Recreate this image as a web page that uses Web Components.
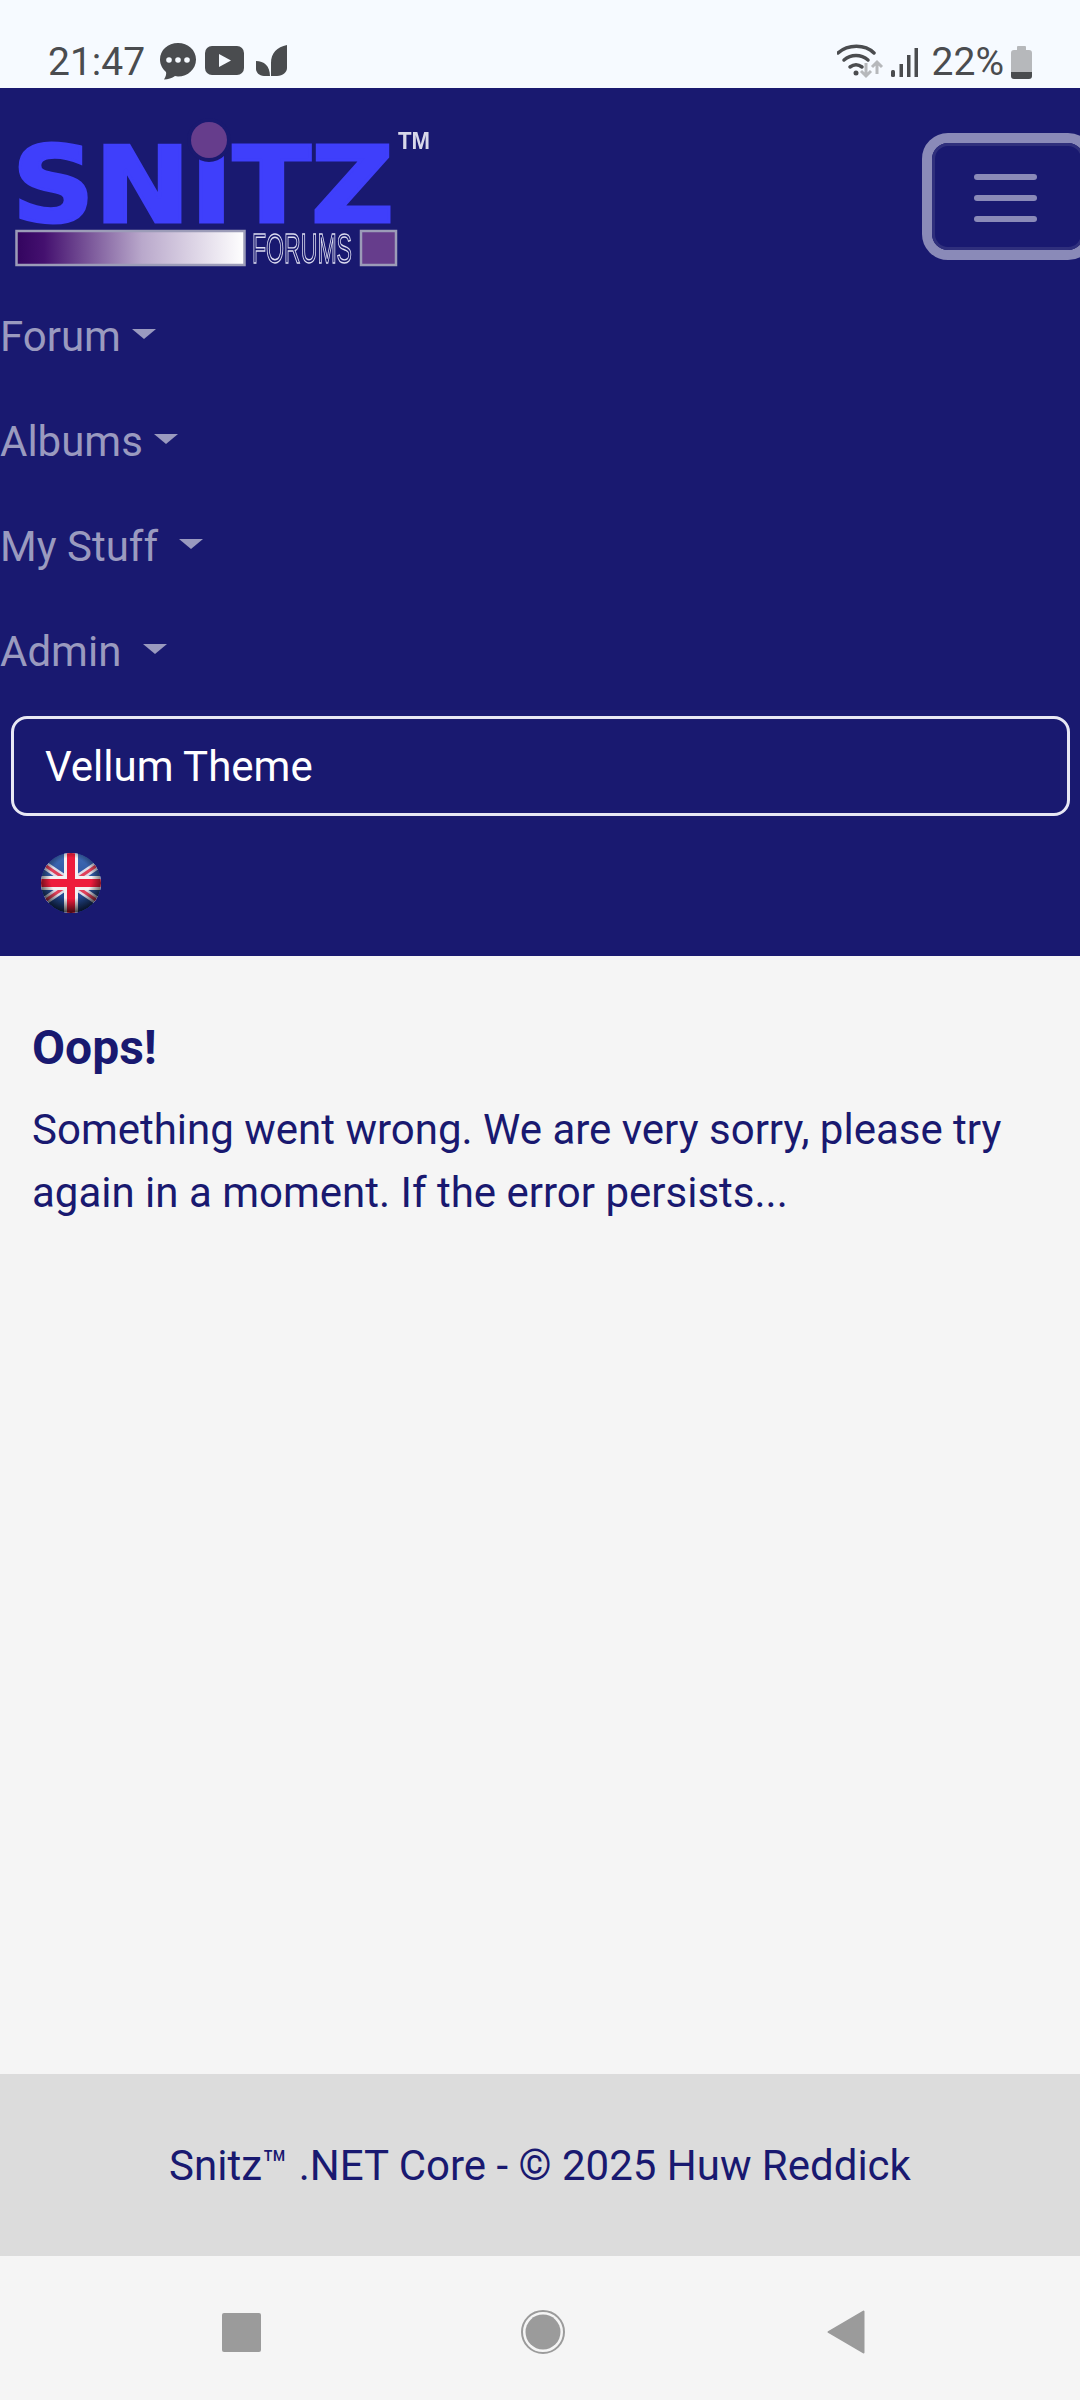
<!DOCTYPE html>
<html>
<head>
<meta charset="utf-8">
<title>Snitz Forums</title>
<style>
  html, body { margin: 0; padding: 0; }
  body { width: 1080px; height: 2400px; overflow: hidden; font-family: Roboto, "Liberation Sans", sans-serif; background: #f5f5f5; }
  .page { display: flex; flex-direction: column; height: 2400px; }
</style>
</head>
<body>
<div class="page">
  <status-bar></status-bar>
  <site-nav>
    <nav-item>Forum</nav-item>
    <nav-item>Albums</nav-item>
    <nav-item>My Stuff&nbsp;</nav-item>
    <nav-item>Admin&nbsp;</nav-item>
    <theme-select slot="after">Vellum Theme</theme-select>
    <flag-button slot="after"></flag-button>
  </site-nav>
  <error-panel title="Oops!">Something went wrong. We are very sorry, please try again in a moment. If the error persists...</error-panel>
  <site-footer>Snitz™ .NET Core - © 2025 Huw Reddick</site-footer>
  <android-nav></android-nav>
</div>

<script>
function define(name, html) {
  customElements.define(name, class extends HTMLElement {
    constructor() {
      super();
      this.attachShadow({ mode: 'open' }).innerHTML = html;
    }
  });
}

define('status-bar', `
  <style>
    :host { display: flex; flex: none; height: 88px; box-sizing: border-box; background: #f6faff; color: #4a4c4f;
      align-items: center; padding: 36px 48px 0 48px; font: 39px/44px Roboto, sans-serif; }
    svg { display: block; flex: none; }
    .left, .right { display: flex; align-items: center; }
    .right { margin-left: auto; }
    .time { margin-right: 15px; }
    .pct { margin: 0 7px 0 13px; }
  </style>
  <div class="left">
    <span class="time">21:47</span>
    <svg width="127" height="38" viewBox="0 0 127 38">
      <path fill="#4a4c4f" d="M18 0C8 0 0 7 0 16.500c0 5 2.500 9.500 6 12.500 .5 2 0 4-2 7.500 4 0 8-1.500 11-3.500 1 .2 2 .5 3 .5 10 0 18-7.500 18-17S28 0 18 0z"/>
      <circle cx="9" cy="17" r="2.800" fill="#f6faff"/><circle cx="18" cy="17" r="2.800" fill="#f6faff"/><circle cx="27" cy="17" r="2.800" fill="#f6faff"/>
      <rect x="45" y="3" width="39" height="29" rx="7" fill="#4a4c4f"/>
      <path fill="#f6faff" d="M59 11l12 6.500-12 6.500z"/>
      <path fill="#4a4c4f" d="M127 2C117 4 111 10 111 20V33H117C123 33 127 29 127 25zM96 18C104 18 110 23 110 33H104C99 33 96 29 96 26z"/>
    </svg>
  </div>
  <div class="right">
    <svg width="82" height="36" viewBox="0 0 82 36">
      <g fill="none" stroke="#4a4c4f" stroke-width="3.500" stroke-linecap="round">
        <path d="M1 9C11 0 28 0 37 9"/>
        <path d="M7 16c7-6 17-6 24 0"/>
        <path d="M13 23c4-3 8-3 12 0"/>
      </g>
      <circle cx="19" cy="29" r="2.500" fill="#4a4c4f"/>
      <g fill="none" stroke="#b6b8bb" stroke-width="3">
        <path d="M29 19v13M24 27l5 5 5-5"/>
        <path d="M40 30V18M35 23l5-5 5 5"/>
      </g>
      <rect x="54" y="26" width="4" height="7" rx="1.500" fill="#4a4c4f"/>
      <rect x="62.500" y="20" width="3.500" height="13" fill="#4a4c4f"/>
      <rect x="70" y="11" width="3.500" height="22" fill="#4a4c4f"/>
      <rect x="77.500" y="4" width="3.500" height="29" fill="#4a4c4f"/>
    </svg>
    <span class="pct">22%</span>
    <svg width="21" height="33" viewBox="0 0 21 33">
      <path fill="#b6b8bb" d="M7 0h7a1 1 0 0 1 1 1v3h3a3 3 0 0 1 3 3v19H0V7a3 3 0 0 1 3-3h3V1a1 1 0 0 1 1-1z"/>
      <path fill="#4a4c4f" d="M0 26h21v4a3 3 0 0 1-3 3H3a3 3 0 0 1-3-3z"/>
    </svg>
  </div>
`);

define('site-nav', `
  <style>
    :host { display: block; flex: none; height: 868px; box-sizing: border-box; background: #191970; overflow: hidden; }
    .top { display: flex; justify-content: space-between; align-items: flex-start; height: 196px; }
    .logo { display: block; margin: 0 0 0 12px; filter: blur(.7px); }
    .toggler { box-sizing: border-box; width: 172px; height: 127px; margin: 45px -14px 0 0; border: 10.500px solid #8a8ab8;
      border-radius: 26px; display: flex; align-items: center; justify-content: center; flex: none; }
    .inner { flex: 1; align-self: stretch; box-sizing: border-box; border: 3px solid #2f2f7c; border-radius: 16px;
      display: flex; flex-direction: column; gap: 15px; align-items: flex-start; justify-content: center; padding: 2px 0 0 39px; }
    .inner i { display: block; width: 63px; height: 6px; border-radius: 3px; background: #8a8ab8; }
    .links { display: block; }
    .after { display: block; padding: 12px 10px 0 11px; }
  </style>
  <div class="top">
    <svg class="logo" width="425" height="190" viewBox="12 88 425 190" font-family="'DejaVu Sans', sans-serif">
      <defs>
        <linearGradient id="bar">
          <stop offset="0" stop-color="#33045f"/>
          <stop offset=".12" stop-color="#44106f"/>
          <stop offset=".55" stop-color="#b9a8cb"/>
          <stop offset="1" stop-color="#ffffff"/>
        </linearGradient>
      </defs>
      <text x="12" y="222" font-size="106" font-weight="700" fill="#3f3ffb" textLength="382" lengthAdjust="spacingAndGlyphs" stroke="#3f3ffb" stroke-width="3">SNITZ</text>
      <circle cx="209" cy="140" r="22" fill="#191970"/>
      <circle cx="209" cy="140" r="18" fill="#663d8c"/>
      <rect x="16.500" y="231" width="228" height="34" fill="url(#bar)" stroke="#9c9cb8" stroke-width="2.500"/>
      <text x="252" y="263" font-size="43" fill="#191970" stroke="#dcdcf0" stroke-width="1.400" textLength="100" lengthAdjust="spacingAndGlyphs" font-family="'Liberation Sans', sans-serif" font-weight="400">FORUMS</text>
      <rect x="361" y="231" width="35" height="34" fill="#663d8c" stroke="#9c9cb8" stroke-width="2.500"/>
      <text x="398" y="149" font-size="24" fill="#d8d8ea" font-weight="700" textLength="32" lengthAdjust="spacingAndGlyphs" font-family="'Liberation Sans', sans-serif">TM</text>
    </svg>
    <div class="toggler"><div class="inner"><i></i><i></i><i></i></div></div>
  </div>
  <div class="links"><slot></slot></div>
  <div class="after"><slot name="after"></slot></div>
`);

define('nav-item', `
  <style>
    :host { display: flex; align-items: center; height: 63px; padding: 21px 0; font: 42px/63px Roboto, sans-serif; color: #9a9abf; }
    .caret { width: 0; height: 0; margin: 0 0 5px 11px; border-top: 10.500px solid #9a9abf; border-left: 12px solid transparent; border-right: 12px solid transparent; }
  </style>
  <slot></slot><span class="caret"></span>
`);

define('theme-select', `
  <style>
    :host { display: flex; align-items: center; box-sizing: border-box; height: 100px; padding: 0 31px;
      border: 3px solid #e8e8f4; border-radius: 16px; color: #fff; font: 42px/63px Roboto, sans-serif; }
  </style>
  <slot></slot>
`);

define('flag-button', `
  <style>
    :host { display: block; width: 62px; height: 62px; margin: 36px 0 0 29px; }
    svg { display: block; filter: blur(.6px); }
  </style>
  <svg width="62" height="62" viewBox="0 0 62 62">
    <defs>
      <clipPath id="c"><circle cx="31" cy="31" r="30"/></clipPath>
      <radialGradient id="sh" cx=".5" cy=".42" r=".62">
        <stop offset=".55" stop-color="#000" stop-opacity="0"/>
        <stop offset="1" stop-color="#000" stop-opacity=".85"/>
      </radialGradient>
      <linearGradient id="sea" x1="0" y1="0" x2="0" y2="1">
        <stop offset="0" stop-color="#3f6cb8"/>
        <stop offset="1" stop-color="#1a3c80"/>
      </linearGradient>
    </defs>
    <g clip-path="url(#c)">
      <rect width="62" height="62" fill="url(#sea)"/>
      <path d="M0 10L62 52M62 10L0 52" stroke="#dcdce8" stroke-width="8"/>
      <path d="M0 10L62 52M62 10L0 52" stroke="#e0405a" stroke-width="3"/>
      <path d="M31 0V62M0 31H62" stroke="#f4f0f2" stroke-width="14"/>
      <path d="M31 0V62M0 31H62" stroke="#ee1c3c" stroke-width="8"/>
      <circle cx="31" cy="31" r="30" fill="url(#sh)"/>
    </g>
  </svg>
`);

define('error-panel', `
  <style>
    :host { display: block; flex: 1; box-sizing: border-box; background: #f5f5f5; color: #191970; padding: 60px 32px 0; font: 42px/63px Roboto, sans-serif; }
    h5 { margin: 0 0 19px; font: 700 48px/63px Roboto, sans-serif; }
    p { margin: 0; }
  </style>
  <h5></h5>
  <p><slot></slot></p>
`);
customElements.whenDefined('error-panel').then(function () {
  var el = document.querySelector('error-panel');
  el.shadowRoot.querySelector('h5').textContent = el.getAttribute('title');
});

define('site-footer', `
  <style>
    :host { display: flex; flex: none; height: 182px; align-items: center; justify-content: center; background: #dcdcdc; color: #191970; font: 42px/63px Roboto, sans-serif; }
  </style>
  <div><slot></slot></div>
`);

define('android-nav', `
  <style>
    :host { display: flex; flex: none; height: 144px; box-sizing: border-box; align-items: center; padding: 8px 0 0 222px; background: #f5f5f5; }
    svg { display: block; flex: none; }
    .home { margin: 0 262px 0 260px; }
  </style>
  <svg width="39" height="39" viewBox="0 0 39 39"><rect width="39" height="39" rx="2" fill="#9b9b9b"/></svg>
  <svg class="home" width="44" height="46" viewBox="0 0 44 46">
    <circle cx="22" cy="23" r="21" fill="none" stroke="#9b9b9b" stroke-width="2"/>
    <circle cx="22" cy="23" r="17.500" fill="#9b9b9b"/>
  </svg>
  <svg width="38" height="44" viewBox="0 0 38 44"><path fill="#9b9b9b" stroke="#9b9b9b" stroke-width="2" stroke-linejoin="round" d="M1.500 22L36.500 1.500V42.500z"/></svg>
`);
</script>
</body>
</html>
